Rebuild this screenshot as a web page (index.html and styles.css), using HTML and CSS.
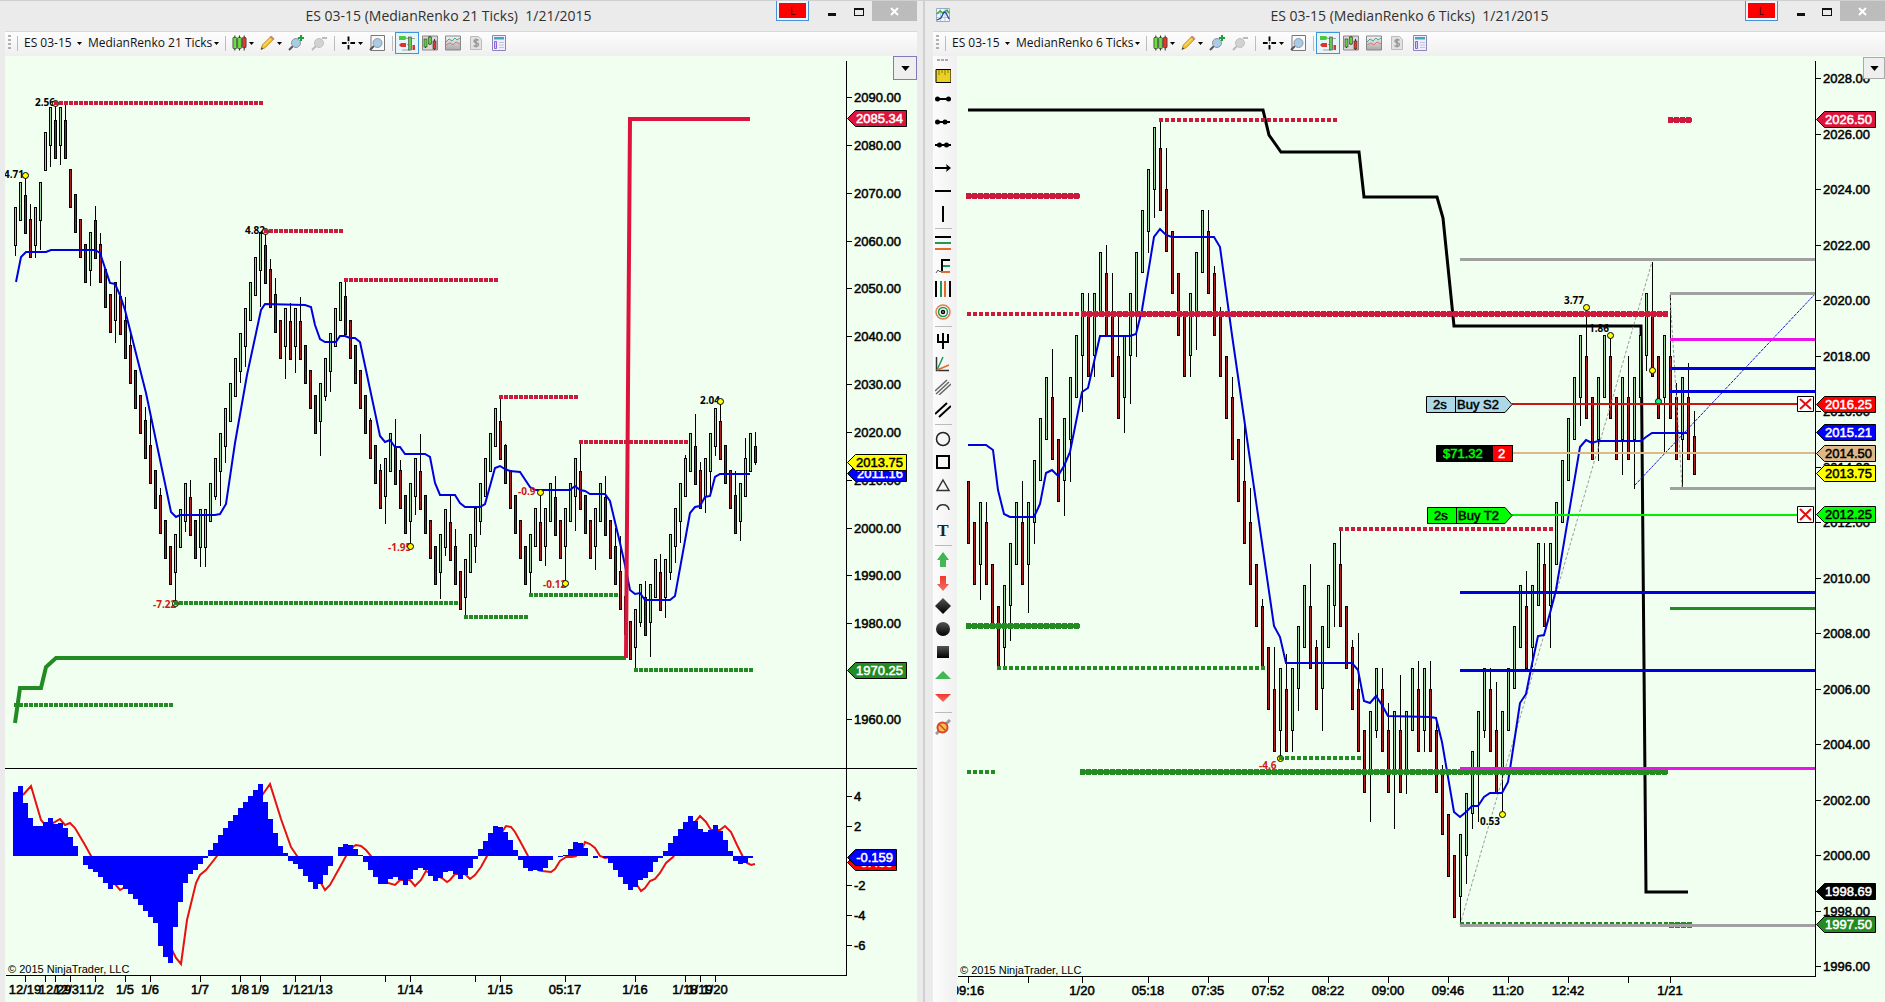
FILE: index.html
```html
<!DOCTYPE html>
<html lang="en">
<head>
<meta charset="utf-8">
<title>ES 03-15 charts</title>
<link rel="stylesheet" href="styles.css">
</head>
<body>
<svg class="defs" aria-hidden="true">
  <defs>
    <linearGradient id="dark" x1="0" y1="0" x2="0" y2="1"><stop offset="0" stop-color="#555"/><stop offset="1" stop-color="#000"/></linearGradient>
    <linearGradient id="gry" x1="0" y1="0" x2="0" y2="1"><stop offset="0" stop-color="#f4f4f4"/><stop offset="1" stop-color="#a8a8a8"/></linearGradient>
    <linearGradient id="up" x1="0" y1="0" x2="0" y2="1"><stop offset="0" stop-color="#3cb54a"/><stop offset="1" stop-color="#45b858"/></linearGradient>
    <linearGradient id="dn" x1="0" y1="0" x2="0" y2="1"><stop offset="0" stop-color="#f0392b"/><stop offset="1" stop-color="#f07068"/></linearGradient>
  </defs>
  <symbol id="caret" viewBox="0 0 5 3"><path d="M0 0h5L2.500 3z"/></symbol>
  <symbol id="candles" viewBox="0 0 16 16"><path d="M3 0v16M8 0v16M13 0v16" stroke="#222"/><g stroke="#333" stroke-width=".8"><rect x="1" y="2" width="4" height="12" rx="1" fill="#6be03c"/><rect x="6" y="2" width="4" height="12" rx="1" fill="#6be03c"/><rect x="11" y="2" width="4" height="11" rx="1" fill="#e23a2e"/></g></symbol>
  <symbol id="pencil" viewBox="0 0 16 16"><path d="M1 15l1.500-5L11 1.500l3 3L5.500 13z" fill="#f3c32e" stroke="#b3801a" stroke-width=".8"/><path d="M11 1.500l1-1 3 3-1 1z" fill="#e88a8a" stroke="#a55" stroke-width=".6"/><path d="M4 11l8-8" stroke="#fbe88a"/><path d="M1 15l.8-2.500 1.600 1.700z" fill="#333"/></symbol>
  <symbol id="zoomin" viewBox="0 0 16 16"><path d="M1 15l4-4" stroke="#555" stroke-width="2"/><circle cx="8" cy="8" r="4.500" fill="#a9cbe4" stroke="#8d99a6"/><path d="M13 0v6M10 3h6" stroke="#1ea03c" stroke-width="2"/></symbol>
  <symbol id="zoomout" viewBox="0 0 16 16"><path d="M1 15l4-4" stroke="#bbb" stroke-width="2"/><circle cx="8" cy="8" r="4.500" fill="#d2d2d2" stroke="#c0c0c0"/><path d="M11 3h5" stroke="#bbb" stroke-width="2"/></symbol>
  <symbol id="cross" viewBox="0 0 16 16"><path d="M8 1v5M8 10v5M1 8h5M10 8h5" stroke="#000" stroke-width="2"/><path d="M7.500 7.500h1v1h-1z"/></symbol>
  <symbol id="zoombox" viewBox="0 0 16 16"><path d="M2 .5h13.500v15H2z" fill="#fafafa" stroke="#777"/><path d="M1 15l4-4" stroke="#555" stroke-width="2"/><circle cx="8.500" cy="8" r="4.500" fill="#a9cbe4" stroke="#8d99a6"/></symbol>
  <symbol id="trader" viewBox="0 0 16 16"><path d="M0 1h6l2 2-2 2H0z" fill="#4fc93c"/><path d="M0 10l2-2h5v4H2z" fill="#d8362c"/><path d="M8 3.500h8M8 9.500h3M3 15h8" stroke="#9a9"/><rect x="9.500" y="2" width="3" height="13" fill="#63c94a" stroke="#444" stroke-width=".6"/><rect x="13.500" y="10" width="2.500" height="5" fill="#d8362c"/></symbol>
  <symbol id="barspane" viewBox="0 0 16 16"><path d="M.5 1h15v14H.5z" fill="#d8d8d8" stroke="#888"/><path d="M3.500 4v9M8 1v9M12.500 4v11" stroke="#333"/><rect x="2" y="4" width="3" height="8" fill="#5fd23c" stroke="#333" stroke-width=".6"/><rect x="6.500" y="2" width="3" height="7" fill="#5fd23c" stroke="#333" stroke-width=".6"/><rect x="11" y="6" width="3" height="8" fill="#e23a2e" stroke="#333" stroke-width=".6"/></symbol>
  <symbol id="linespane" viewBox="0 0 16 16"><path d="M.5 1h15v14H.5z" fill="url(#gry)" stroke="#888"/><path d="M1 7l3-3 3 2 3-3 2 2 3-2" fill="none" stroke="#4a9"/><path d="M1 10l4-2 3 2 3-3 4 2" fill="none" stroke="#d77"/></symbol>
  <symbol id="dollar" viewBox="0 0 16 16"><path d="M2.500 1.500h8l3 3v10h-11z" fill="#e2e2e2" stroke="#bbb"/><path d="M10.500 5.500C9 4 6 4.500 6 6.300s4.500 1.200 4.500 3.200S7 12 5.500 10.500M8 3.500v9" fill="none" stroke="#999" stroke-width="1.500"/></symbol>
  <symbol id="props" viewBox="0 0 16 16"><path d="M1.500.5h13v15h-13z" fill="#eef" stroke="#8a86b8"/><path d="M3 2h10v2.500H3z" fill="#45a3c4"/><path d="M3.500 6.500h2v7h-2z" fill="#d9c9ff" stroke="#8b62d8"/><path d="M8 7.500h5M8 10h5M8 12.500h5" stroke="#c3c3d8"/></symbol>
  <symbol id="appicon" viewBox="0 0 14 14"><path d="M.5.5h13v13H.5z" fill="#f4f8fc" stroke="#9ab"/><path d="M4.500 1v12M9 1v12M1 5h12M1 9.500h12" stroke="#b9c9da"/><path d="M1 6l3-3 3 2 4-3 2 3" fill="none" stroke="#3a3" stroke-width="1.500"/><path d="M1 12l4-2 3-6 2 1 3 6" fill="none" stroke="#24a" stroke-width="1.300"/></symbol>
</svg>
<main class="desk">
  <section class="window w1">
    <header class="titlebar">
      <span></span>
      <h1>ES 03-15 (MedianRenko 21 Ticks)&nbsp; 1/21/2015</h1>
      <div class="controls">
        <button class="link">L</button>
        <button class="min" aria-label="Minimize"><i></i></button>
        <button class="max" aria-label="Maximize"><i></i></button>
        <button class="close" aria-label="Close"><svg viewBox="0 0 9 9"><path d="M1 1l7 7M8 1l-7 7"/></svg></button>
      </div>
    </header>
    <div class="toolbar"></div>
    <div class="content">
      <div class="chart">
        <button class="chartmenu" aria-label="Chart menu"><svg class="caret"><use href="#caret"/></svg></button>
        <svg class="plot" id="chart1" viewBox="5 56 912 946" preserveAspectRatio="xMinYMin meet">
          <g class="candles"></g>
          <polyline class="ma" points="16,282 21,257 26,252 46,252 51,250 95,250 100,253 105,268 110,283 115,284 120,295 125,310 146,393 171,512 176,517 180,515 215,515 220,514 226,504 235,443 247,375 261,310 265,304 305,305 311,307 315,325 320,339 325,342 336,342 340,336 345,336 350,338 355,338 360,342 380,436 385,442 390,440 395,447 400,447 405,454 425,454 430,457 435,483 440,495 455,495 460,503 465,507 480,507 485,504 495,468 500,466 505,469 510,471 520,472 530,487 535,490 570,490 575,486 580,490 585,491 590,494 605,494 610,501 620,543 625,565 630,590 635,594 640,593 645,600 670,600 675,596 690,513 695,507 700,506 705,497 710,496 715,477 720,474 750,474"/>
          <polyline class="stop long" points="15,723 20,688 41,688 46,667 56,658 626,658"/>
          <polyline class="stop short" points="626,658 630,119 750,119"/>
          <g class="note"><text x="4" y="178">4.71</text><text x="35" y="106">2.56</text><text x="245" y="234">4.82</text><text x="700" y="404">2.04</text></g>
          <g class="note neg"><text x="388" y="551">-1.95</text><text x="153" y="608">-7.22</text><text x="518" y="495">-0.9</text><text x="543" y="588">-0.12</text></g>
          <g class="dot"><circle cx="25.500" cy="175.500" r="3"/><circle cx="410.500" cy="546.500" r="3"/><circle cx="540.500" cy="492.500" r="3"/><circle cx="565.500" cy="583.500" r="3"/><circle cx="720.500" cy="401.500" r="3"/><circle cx="55.500" cy="103.500" r="3"/><circle cx="265.500" cy="231.500" r="3"/><circle cx="175.500" cy="603.500" r="3"/></g>
          <g class="level res"><path d="M54 103H263M264 231H343M344 280H498M499 397H578M579 442H688"/></g>
          <g class="level sup"><path d="M14 705H173M174 603H458M464 617H528M529 595H618M634 670H753"/></g>
          <polyline class="signal" points="23,795 31,786 41,820 46,826 53,823 60,819 65,825 70,823 75,828 85,845 91,856 115,884 120,890 125,887 135,880 165,900 172,950 176,958 181,964 187,920 196,883 200,875 206,870 217,856 263,794 270,784 281,819 291,847 297,856 321,883 325,890 330,885 340,867 346,856 354,846 356,845 361,846 366,850 371,856 388,883 395,885 400,880 410,880 415,886 421,880 426,871 442,878 447,882 450,880 455,874 465,874 470,879 475,875 481,867 487,856 504,829 506,826 511,827 515,832 520,841 528,856 538,870 542,871 551,872 555,869 560,861 566,857 572,857 576,856 583,847 585,842 590,844 595,848 600,856 605,858 611,857 637,885 641,891 645,888 650,881 655,879 660,873 666,863 673,857 695,822 700,816 706,822 711,830 720,830 725,826 731,832 737,845 743,857 747,863 751,865 755,864"/>
          <g class="hist"></g>
          <path class="frame" d="M5 768.500H917M6 975.500H847M846.500 61V976"/>
          <text class="copy" x="8" y="973">© 2015 NinjaTrader, LLC</text>
          <g class="axis"></g>
          <g class="tags"></g>
        </svg>
      </div>
    </div>
  </section>
  <section class="window w2">
    <header class="titlebar">
      <svg class="appicon"><use href="#appicon"/></svg>
      <h1>ES 03-15 (MedianRenko 6 Ticks)&nbsp; 1/21/2015</h1>
      <div class="controls">
        <button class="link">L</button>
        <button class="min" aria-label="Minimize"><i></i></button>
        <button class="max" aria-label="Maximize"><i></i></button>
        <button class="close" aria-label="Close"><svg viewBox="0 0 9 9"><path d="M1 1l7 7M8 1l-7 7"/></svg></button>
      </div>
    </header>
    <div class="toolbar"></div>
    <div class="content">
      <nav class="draw" aria-label="Drawing tools">
        <span class="dots"></span>
        <button aria-label="Ruler"><svg viewBox="0 0 16 16"><path d="M1 1.500h15v13H1z" fill="#e8d024" stroke="#000"/><path d="M4 2v5M7 2v3M10 2v5M13 2v3" stroke="#8a7a10"/></svg></button>
        <button aria-label="Line"><svg viewBox="0 0 16 16"><path d="M2 8h12" stroke="#000" stroke-width="2"/><circle cx="2.500" cy="8" r="2.500"/><circle cx="13.500" cy="8" r="2.500"/></svg></button>
        <button aria-label="Ray"><svg viewBox="0 0 16 16"><path d="M2 8h13" stroke="#000" stroke-width="2"/><circle cx="2.500" cy="8" r="2.500"/><circle cx="10" cy="8" r="2.500"/></svg></button>
        <button aria-label="Extended line"><svg viewBox="0 0 16 16"><path d="M0 8h16" stroke="#000" stroke-width="2"/><circle cx="4.500" cy="8" r="2.500"/><circle cx="11.500" cy="8" r="2.500"/></svg></button>
        <button aria-label="Arrow line"><svg viewBox="0 0 16 16"><path d="M0 8h14" stroke="#000" stroke-width="2"/><path d="M11 4l5 4-5 4 1-4z"/></svg></button>
        <button aria-label="Horizontal line"><svg viewBox="0 0 16 16"><path d="M0 8h16" stroke="#000" stroke-width="2"/></svg></button>
        <button aria-label="Vertical line"><svg viewBox="0 0 16 16"><path d="M8 0v16" stroke="#000" stroke-width="2"/></svg></button>
        <hr>
        <button aria-label="Fibonacci retracements"><svg viewBox="0 0 16 16"><path d="M0 2h16" stroke="#000" stroke-width="2"/><path d="M0 8h16" stroke="#1d9a50" stroke-width="2"/><path d="M0 14h16" stroke="#e06a30" stroke-width="2"/></svg></button>
        <button aria-label="Fibonacci extensions"><svg viewBox="0 0 16 16"><path d="M7 14V2h8" fill="none" stroke="#000" stroke-width="2"/><path d="M8 8h7" stroke="#1d9a50" stroke-width="2"/><path d="M6 14h9" stroke="#e06a30" stroke-width="2"/><path d="M1 15l2-3 2 2 1-1" fill="none" stroke="#555"/></svg></button>
        <button aria-label="Fibonacci time"><svg viewBox="0 0 16 16"><path d="M1 0v16M15 0v16" stroke="#000" stroke-width="2"/><path d="M6 0v16" stroke="#1d9a50" stroke-width="2"/><path d="M10 0v16" stroke="#e06a30" stroke-width="2"/></svg></button>
        <button aria-label="Fibonacci circle"><svg viewBox="0 0 16 16"><g fill="none" stroke-width="1.500"><circle cx="8" cy="8" r="7" stroke="#d8824c"/><circle cx="8" cy="8" r="4.500" stroke="#1d9a50"/><circle cx="8" cy="8" r="1.500" stroke="#000"/></g></svg></button>
        <hr>
        <button aria-label="Andrews pitchfork"><svg viewBox="0 0 16 16"><path d="M3 1v8h10V1M8 0v16" fill="none" stroke="#000" stroke-width="2"/></svg></button>
        <button aria-label="Gann fan"><svg viewBox="0 0 16 16"><path d="M1.500 1v13.500H14" fill="none" stroke="#333" stroke-width="1.500"/><path d="M2 14L8 1" stroke="#1d9a50" stroke-width="1.500"/><path d="M2 14l12-5" stroke="#e06a30" stroke-width="1.500"/></svg></button>
        <button aria-label="Regression channel"><svg viewBox="0 0 16 16"><path d="M0 12L12 1M1 15L14 3M4 16L16 5" stroke="#666" stroke-width="1.500"/></svg></button>
        <button aria-label="Trend channel"><svg viewBox="0 0 16 16"><path d="M0 12L12 1M4 15L16 4" stroke="#000" stroke-width="2"/></svg></button>
        <hr>
        <button aria-label="Ellipse"><svg viewBox="0 0 16 16"><circle cx="8" cy="8" r="6.500" fill="none" stroke="#222" stroke-width="1.500"/></svg></button>
        <button aria-label="Rectangle"><svg viewBox="0 0 16 16"><path d="M2 2h12v12H2z" fill="none" stroke="#000" stroke-width="2"/></svg></button>
        <button aria-label="Triangle"><svg viewBox="0 0 16 16"><path d="M8 3l6 10.500H2z" fill="none" stroke="#333" stroke-width="1.500"/></svg></button>
        <button aria-label="Arc"><svg viewBox="0 0 16 16"><path d="M2 10c1-7 11-7 12 0" fill="none" stroke="#333" stroke-width="1.500"/></svg></button>
        <button class="txt" aria-label="Text">T</button>
        <hr>
        <button aria-label="Arrow up"><svg viewBox="0 0 16 16"><path d="M8 0l6 8h-3v7H5V8H2z" fill="url(#up)"/></svg></button>
        <button aria-label="Arrow down"><svg viewBox="0 0 16 16"><path d="M8 16l6-7h-3V1H5v8H2z" fill="url(#dn)"/></svg></button>
        <button aria-label="Diamond"><svg viewBox="0 0 16 16"><path d="M8 0l8 8-8 8-8-8z" fill="url(#dark)"/></svg></button>
        <button aria-label="Dot"><svg viewBox="0 0 16 16"><circle cx="8" cy="8" r="7" fill="url(#dark)"/></svg></button>
        <button aria-label="Square"><svg viewBox="0 0 16 16"><path d="M2 2h12v12H2z" fill="url(#dark)"/></svg></button>
        <button aria-label="Triangle up"><svg viewBox="0 0 16 16"><path d="M8 4l8 8H0z" fill="url(#up)"/></svg></button>
        <button aria-label="Triangle down"><svg viewBox="0 0 16 16"><path d="M8 12l8-8H0z" fill="url(#dn)"/></svg></button>
        <hr>
        <button aria-label="Remove drawings"><svg viewBox="0 0 16 16"><path d="M1 15L15 1" stroke="#999" stroke-width="3"/><circle cx="7.500" cy="8.500" r="5" fill="#f6c04a" stroke="#d8442e" stroke-width="2"/><path d="M4 5l7 7" stroke="#d8442e" stroke-width="1.500"/></svg></button>
      </nav>
      <div class="chart">
        <button class="chartmenu" aria-label="Chart menu"><svg class="caret"><use href="#caret"/></svg></button>
        <svg class="plot" id="chart2" viewBox="957 56 928 946" preserveAspectRatio="xMinYMin meet">
          <g class="note"><text x="1589" y="332">1.86</text></g>
          <polyline class="slow" points="968,110 1263,110 1269,135 1281,152 1359,152 1364,197 1437,197 1443,218 1454,326 1641,326 1646,892 1688,892"/>
          <g class="candles"></g>
          <path class="zig" d="M1460 925L1652 262M1670 295L1682 487"/>
          <polyline class="ma" points="968,445 986,445 993,450 998,490 1004,514 1010,517 1034,517 1040,504 1046,473 1052,470 1058,476 1064,466 1070,452 1082,392 1088,388 1100,336 1130,336 1136,334 1142,310 1154,237 1160,229 1166,235 1172,237 1214,237 1220,247 1232,335 1244,418 1274,626 1280,637 1286,663 1352,663 1358,670 1364,701 1370,703 1376,696 1382,705 1388,716 1430,717 1436,718 1442,742 1454,812 1460,817 1466,812 1472,806 1478,806 1484,797 1490,793 1502,793 1508,782 1514,743 1520,703 1526,694 1532,664 1538,636 1544,635 1550,613 1556,590 1580,447 1586,440 1592,443 1598,441 1641,441 1646,437 1652,433 1688,433"/>
          <path class="trend" d="M1635 485L1815 294"/>
          <g class="dot"><circle cx="1280.500" cy="758.500" r="3"/><circle cx="1502.500" cy="814.500" r="3"/><circle cx="1610.500" cy="335.500" r="3"/><circle cx="1652.500" cy="370.500" r="3"/><circle cx="1658.500" cy="401.500" r="3" class="mint"/></g>
          <g class="level six res"><path d="M967 314H1079M1159 120H1337M1339 529H1553"/></g>
          <g class="level six sup"><path d="M967 772H995M997 668H1265M1279 758H1361M1460 924H1668"/></g>
          <g class="heavy res"><path d="M966 196H1080M1081 314H1668M1668 120H1692"/></g>
          <g class="heavy sup"><path d="M966 626H1080M1080 772H1668M1669 925H1692"/></g>
          <g class="dot"><circle cx="1586.500" cy="307.500" r="3"/></g>
          <g class="hline">
            <path class="gray" d="M1460 259.500H1815M1670 293.500H1815M1670 488.500H1815M1460 925.500H1815"/>
            <path class="pink" d="M1670 339.500H1815M1460 768.500H1815"/>
            <path class="blue" d="M1670 368.500H1815M1670 391.500H1815M1460 592.500H1815M1460 670.500H1815"/>
            <path class="green" d="M1670 608.500H1815"/>
          </g>
          <g class="order"><path stroke="#cc1414" d="M1512 404H1797"/><path stroke="#deb887" d="M1513 453H1815"/><path stroke="#0e0" d="M1512 515H1797"/></g>
          <g class="note"><text x="1564" y="304">3.77</text><text x="1480" y="825">0.53</text></g>
          <g class="note neg"><text x="1259" y="769">-4.6</text></g>
          <g class="otag">
            <path fill="#add8e6" d="M1426.500 396.500H1505L1512 404.500 1505 412.500H1426.500zM1455.500 396V412"/><text x="1433" y="409">2s</text><text x="1457" y="409">Buy S2</text>
            <path fill="#0f0" d="M1427.500 507.500H1505L1512 515.500 1505 523.500H1427.500zM1456.500 507V523"/><text x="1434" y="520">2s</text><text x="1458" y="520">Buy T2</text>
            <path fill="#000" d="M1436.500 445.500H1512.500V461.500H1436.500z"/><path fill="#f00" d="M1492.500 445.500H1512.500V461.500H1492.500z"/><text class="pnl" x="1443" y="458">$71.32</text><text class="white" x="1498" y="458">2</text>
            <path fill="#fff" d="M1797.500 396.500H1813.500V411.500H1797.500zM1797.500 506.500H1813.500V522.500H1797.500z"/>
            <path class="x" d="M1800 399l11 10M1811 399l-11 10M1800 509l11 11M1811 509l-11 11"/>
          </g>
          <path class="frame" d="M958 976.500H1816M1815.500 61V977"/>
          <text class="copy" x="960" y="974">© 2015 NinjaTrader, LLC</text>
          <g class="axis"></g>
          <g class="tags"></g>
        </svg>
      </div>
    </div>
  </section>
</main>
<template id="tools">
  <span class="grip"></span><span class="sep"></span>
  <label class="pick inst"><select aria-label="Instrument"><option>ES 03-15</option></select><svg class="caret"><use href="#caret"/></svg></label>
  <label class="pick period"><select aria-label="Period"><option></option></select><svg class="caret"><use href="#caret"/></svg></label>
  <span class="sep"></span>
  <button class="drop" aria-label="Chart style"><svg><use href="#candles"/></svg><svg class="caret"><use href="#caret"/></svg></button>
  <button class="drop" aria-label="Draw"><svg><use href="#pencil"/></svg><svg class="caret"><use href="#caret"/></svg></button>
  <button class="tool" aria-label="Zoom in"><svg><use href="#zoomin"/></svg></button>
  <button class="tool" aria-label="Zoom out"><svg><use href="#zoomout"/></svg></button>
  <span class="sep"></span>
  <button class="drop" aria-label="Crosshair"><svg><use href="#cross"/></svg><svg class="caret"><use href="#caret"/></svg></button>
  <button class="tool" aria-label="Zoom frame"><svg><use href="#zoombox"/></svg></button>
  <span class="sep"></span>
  <div class="toggles">
    <button class="on" aria-label="Chart trader"><svg><use href="#trader"/></svg></button>
    <button aria-label="Data series"><svg><use href="#barspane"/></svg></button>
    <button aria-label="Indicators"><svg><use href="#linespane"/></svg></button>
    <button aria-label="Strategies"><svg><use href="#dollar"/></svg></button>
    <button aria-label="Properties"><svg><use href="#props"/></svg></button>
  </div>
</template>
<script src="charts.js"></script>
</body>
</html>
```
FILE: styles.css
```css
* { box-sizing: border-box; }
body { margin: 0; background: #ebebeb; font-family: "Open Sans", "Noto Sans", sans-serif; color: #222; }
button { margin: 0; padding: 0; border: 0; background: none; font: inherit; }
.defs { position: absolute; width: 0; height: 0; }

.desk { display: grid; grid-template-columns: 925fr 960fr; height: 100vh; overflow: hidden; }
.window { display: flex; flex-direction: column; min-width: 0; border-top: 1px solid #d0d0d0; background: #ebebeb; }
.w1 { border-right: 2px solid #d0d0d0; padding: 0 6px 0 5px; }
.w2 { padding-left: 8px; }

.titlebar { display: grid; grid-template-columns: 116px 1fr 141px; height: 30px; }
.w2 .titlebar { grid-template-columns: 141px 1fr 140px; }
.titlebar h1 { margin: 0; font-size: 14px; font-weight: 400; line-height: 29px; text-align: center; white-space: nowrap; color: #303030; }
.appicon { width: 14px; height: 14px; margin: 7px 0 0 3px; }
.controls { display: flex; height: 20px; overflow: hidden; }
.link { width: 34px; height: 20px; border: 1px solid #4a90d9; border-top: 0; background: #f00; box-shadow: inset 0 0 0 2px #eef4fb; font-size: 10px; line-height: 18px; color: #400; }
.min, .max { width: 27px; display: grid; place-items: center; }
.min { margin-left: 10px; }
.min i { width: 8px; height: 3px; margin-top: 7px; background: #111; }
.max i { width: 10px; height: 8px; border: 1px solid #111; border-top-width: 2px; margin-top: 1px; }
.close { flex: none; width: 45px; background: #bcbcbc; display: grid; place-items: center; }
.close svg { width: 9px; height: 9px; stroke: #fff; stroke-width: 2; }

.toolbar { display: flex; align-items: center; gap: 6px; height: 25px; padding: 0 3px 2px; background: linear-gradient(#fdfdfd, #efefef); border-top: 1px solid #d8d8d8; font-size: 12px; }
.grip { width: 3px; height: 16px; background: repeating-linear-gradient(#b0b0b0 0 2px, transparent 2px 4px); }
.sep { width: 1px; height: 15px; background: #bdbdbd; }
.pick { display: flex; align-items: center; justify-content: space-between; }
.pick select { flex: 1; min-width: 0; border: 0; padding: 0; appearance: none; background: none; font: inherit; line-height: 20px; color: #111; }
.inst { width: 58px; }
.period { width: 131px; }
.w2 .period { width: 124px; }
.caret { flex: none; width: 5px; height: 3px; fill: #000; }
.drop { width: 22px; display: flex; align-items: center; gap: 2px; }
.drop svg:first-child, .tool svg, .toggles svg { flex: none; width: 16px; height: 16px; display: block; }
.drop svg:first-child { width: 15px; }
.tool { width: 17px; }
.toggles { display: flex; align-items: center; gap: 7px; }
.toggles .on { margin: -3px -4px; padding: 2px 3px; border: 1px solid #3c96dc; background: #e8f4fc; }

.content { flex: 1; min-height: 0; display: flex; }
.draw { width: 24px; padding: 3px 2px 0; display: flex; flex-direction: column; gap: 7px; background: linear-gradient(90deg, #fcfcfc, #f0f0f0); }
.draw button, .draw svg { display: block; width: 16px; height: 16px; flex: none; }
.draw hr { flex: none; width: 17px; height: 1px; border: 0; margin: -1px 0; background: #bbb; }
.draw .txt { font: bold 17px/16px "Liberation Serif", serif; color: #222; }
.dots { flex: none; width: 11px; height: 2px; margin-left: 2px; background: repeating-linear-gradient(90deg, #aaa 0 3px, transparent 3px 4px); }
.chart { flex: 1; min-width: 0; position: relative; background: #f0fff0; overflow: hidden; }
.plot { display: block; width: 100%; height: 100%; font-family: "Liberation Sans", Arial, sans-serif; font-size: 13px; }
.chartmenu { position: absolute; top: 0; right: 0; width: 24px; height: 24px; border: 1px solid #8878b8; background: #efefef; display: grid; place-items: center; }
.w2 .chartmenu { top: 1px; right: 0; width: 22px; height: 22px; border-color: #aaa; }
.chartmenu .caret { width: 9px; height: 5px; }

.candles, .hist, .axis path, .frame, .hline, .order { shape-rendering: crispEdges; }
.candles .up { fill: #9ad89a; }
.candles .down { fill: #b01c1c; }
.ma { fill: none; stroke: #0000dc; stroke-width: 2; }
.stop { fill: none; stroke-width: 4; }
.long { stroke: #228b22; }
.short { stroke: #dc143c; }
.slow { fill: none; stroke: #000; stroke-width: 3; }
.signal { fill: none; stroke: #e81010; stroke-width: 2; }
.hist { fill: #00f; }
.res { stroke: #cc1a3c; }
.sup { stroke: #228b22; }
.level { stroke-width: 4; stroke-dasharray: 4 1; shape-rendering: crispEdges; }
.six { stroke-dasharray: 4 2; }
.heavy { stroke-width: 4; }
.heavy .bead { stroke-width: 6; stroke-dasharray: 5 1; }
.frame, .axis path { stroke: #000; fill: none; }
.axis text { stroke: #000; stroke-width: .5px; }
.copy { font-size: 11px; }
.note { font: bold 10px "Noto Sans", sans-serif; }
.neg { fill: #d01818; }
.dot { fill: #ff0; stroke: #000; }
.mint { fill: #0f8; }
.zig { stroke: #999; fill: none; stroke-dasharray: 3 2; }
.trend { stroke: #1414dc; stroke-dasharray: 3 1; fill: none; }
.hline { stroke-width: 3; }
.gray { stroke: #a0a0a0; }
.pink { stroke: #e814e8; }
.blue { stroke: #0000dc; }
.green { stroke: #228b22; }
.order { stroke-width: 2; }
.otag path { stroke: #000; }
.otag text { stroke: #000; stroke-width: .5px; }
.otag .pnl { fill: #0f0; stroke: #0f0; }
.otag .white { fill: #fff; stroke: #fff; }
.otag .x { stroke: #e01010; stroke-width: 2; }
.tags path { stroke: #000; }
.tags text { stroke-width: .5px; }
```
FILE: charts.js
```js
const NS = 'http://www.w3.org/2000/svg';
function add(parent, name, attrs, text) {
  const el = document.createElementNS(NS, name);
  for (const k in attrs) el.setAttribute(k, attrs[k]);
  if (text !== undefined) el.textContent = text;
  parent.append(el);
  return el;
}

document.querySelectorAll('.toolbar').forEach((bar, n) => {
  bar.append(document.getElementById('tools').content.cloneNode(true));
  bar.querySelector('.period option').textContent = ['MedianRenko 21 Ticks', 'MedianRenko 6 Ticks'][n];
});

// Each candle: direction, body top, optional ^high and _low of the wick, optional =body height.
function candles(svg, x0, step, body, data) {
  const g = svg.querySelector('.candles');
  data.trim().split(/\s+/).forEach((c, i) => {
    const top = +c.match(/^.(\d+)/)[1];
    const pick = (ch, d) => { const m = c.match(new RegExp('\\' + ch + '(\\d+)')); return m ? +m[1] : d; };
    const h = pick('=', body), high = pick('^', top), low = pick('_', top + h), x = x0 + i * step;
    add(g, 'rect', { x: x, y: high, width: 1, height: low - high });
    add(g, 'rect', { x: x - 1, y: top, width: 3, height: h });
    add(g, 'rect', { x: x, y: top + 1, width: 1, height: h - 2, class: c[0] === 'u' ? 'up' : 'down' });
  });
}

function axis(svg, x, y, base, prices, times) {
  const g = svg.querySelector('.axis');
  prices.forEach(([label, py]) => {
    add(g, 'path', { d: `M${x} ${py + 0.5}h6` });
    add(g, 'text', { x: x + 8, y: py + 5 }, label);
  });
  times.forEach(([label, tx]) => {
    add(g, 'path', { d: `M${tx + 0.5} ${y}v6` });
    if (label) add(g, 'text', { x: tx, y: base, 'text-anchor': 'middle' }, label);
  });
}

function tags(svg, x, list) {
  const g = svg.querySelector('.tags');
  list.forEach(([label, cy, fill, ink, w = 60]) => {
    add(g, 'path', { d: `M${x + 0.5} ${cy + 0.5}l8 -8H${x + w - 0.5}v16H${x + 8.5}z`, fill });
    add(g, 'text', { x: x + w - 4, y: cy + 5, 'text-anchor': 'end', fill: ink, stroke: ink }, label);
  });
}

const c1 = document.getElementById('chart1');
candles(c1, 15, 5, 39, `
u207_256 u182 d195^177 d219^204 u207_258 u182_250 u132 u107_167 d120^105 u107_165
d120^105 d169 d194 d219 d244 u232_286 d220^206 d244^233 d269 d294
u282_343 d296^261 d320^297 d345^333 d370 d395 d420^407 d445^417 d470 d495^488
d520 d546 u534_603 u509 u483_532 d497^480 d520 u509_567 u509_567 u483
u458_500 u433_506 u408_463 u383 u358 u333_383 u308_367 u282 u257 u232_307
d245^232 d269^259 d294^278 d320 u308_379 d321^303 u308_373 d321^297 d345 d370
d395 u383_456 u358_401 u333_392 u308 u282 d296^280 d320 d345 d370
d395 d420^418 d445 d470^464 u458_524 u433 d446^419 d470^460 d495 u483_546
u458_515 d471^434 d495 d520 d546 u534_599 u509_556 d522^494 d546^529 d571
u559_615 u534 u508_563 u483_535 u458 u433 u408 d421^399 d445^444 d470
d495 d520 d546 u534_593 u508 d522^493 u508_566 u483 d497^476 d520
u508_582 u483 u458_531 d471^443 d495 d520 u508_570 u483 d497^476 d520
d546^528 d571^536 d596 d621 u609_669 u584_627 d597^581 u584_657 u559 d572^554
u559_618 u534_580 u508_563 u483_543 u458^455 u433 d446^414 d470^462 u458_513 u433_495
u408_456 d421^404 d445 d470 d495^471 u483_541 u458^438 u433 d446^432_465=17`);

const zero = 856;
[792,786,803,818,826,826,822,818,824,823,828,837,846,856,865,869,872,877,883,889,885,885,889,894,899,905,911,917,923,946,
957,963,927,902,883,874,870,864,858,850,843,835,828,821,815,808,802,796,790,784,802,819,833,846,853,861,864,869,876,882,
889,884,875,866,856,847,844,845,849,855,862,870,877,884,884,879,877,880,885,879,870,868,870,876,881,878,872,871,874,879,
875,868,859,849,841,833,826,827,832,840,850,860,868,871,870,871,868,860,856,857,855,849,842,843,848,856,858,856,858,863,
870,877,884,890,887,880,878,872,862,858,851,843,836,829,822,816,821,829,832,830,825,831,840,851,861,864,863,858
].forEach((y, i) => add(c1.querySelector('.hist'), 'rect', { x: 13 + i * 5, y: Math.min(y, zero), width: 5, height: Math.abs(y - zero) }));

axis(c1, 846, 976, 994,
  [['2090.00', 97], ['2080.00', 145], ['2070.00', 193], ['2060.00', 241], ['2050.00', 288], ['2040.00', 336], ['2030.00', 384],
   ['2020.00', 432], ['2010.00', 480], ['2000.00', 528], ['1990.00', 575], ['1980.00', 623], ['1960.00', 719],
   ['4', 796], ['2', 826], ['-2', 885], ['-4', 915], ['-6', 945]],
  [['12/19', 25], ['', 45], ['12/29', 55], ['12/31', 70], ['1/2', 95], ['1/5', 125], ['1/6', 150], ['1/7', 200], ['1/8', 240],
   ['1/9', 260], ['1/12', 295], ['1/13', 320], ['', 385], ['1/14', 410], ['', 475], ['1/15', 500], ['05:17', 565], ['1/16', 635],
   ['1/18', 685], ['1/19', 700], ['1/20', 715]]);
tags(c1, 847, [['2085.34', 118, '#dc143c', '#fff'], ['2011.16', 473, '#00f', '#fff'], ['2013.75', 462, '#ff0', '#000'],
  ['1970.25', 670, '#228b22', '#fff'], ['-0.489', 862, '#f00', '#fff', 50], ['-0.159', 857, '#00f', '#fff', 50]]);

const c2 = document.getElementById('chart2');
candles(c2, 968, 6, 63, `
d481 d522 u502_600 d522^502 d564 d606 u585_668 u543_641 u502 d522^481
u502_613 u460_544 u418 u377 d397^349 d439 u418_516 u377_482 u335 u293_412
d314^293 u293_377 u252 d273^245 d314^273 d356^315 u335_433 u293_404 u252_357 u210
u169_253 u127_218 d148^120 d189^148 d231 d273 d314 u293_377 u252_350 u210
d231^210 d273^266 d314^307 d356 d397^377 d439 d481^425 d522^488 d564 d606^599
d647 d689^647 u668_757 d689^654 u668_752 u626_711 u585 d606^564 d647^640 u626_731
u585 u543_627 d564^530 d606 d647^640 d689^633 d730 u711_822 u668_738 d689^668
d730^703 u711_829 d730^675 u711_794 u668 d689^661 u668_752 d689^661 d730^717 d772^765
d814 d855 u834_924 u793_884 u751_829 u711_822 u668_738 d689^668 d730^682 u711_813
u668 u626 u585 d606^571 u585_667 u543 d564^543 u543_648 u502 u460
u418 u377 u335_426 d356^310 d397 u377_461 u335 d356^337 d397 u377_475
d397^356 u377_489 u335 u293_371 d314^262 d356 u335_453 d356^295 d397^383 u377_487
d397^363 d436^411=39`);
axis(c2, 1815, 977, 995,
  [['2028.00', 78], ['2026.00', 134], ['2024.00', 189], ['2022.00', 245], ['2020.00', 300], ['2018.00', 356], ['2016.00', 411],
   ['2014.00', 467], ['2012.00', 522], ['2010.00', 578], ['2008.00', 633], ['2006.00', 689], ['2004.00', 744], ['2002.00', 800],
   ['2000.00', 855], ['1998.00', 911], ['1996.00', 966]],
  [['09:16', 968], ['', 1028], ['1/20', 1082], ['05:18', 1148], ['07:35', 1208], ['07:52', 1268], ['08:22', 1328], ['09:00', 1388],
   ['09:46', 1448], ['11:20', 1508], ['12:42', 1568], ['', 1628], ['1/21', 1670]]);
tags(c2, 1816, [['2026.50', 119, '#dc143c', '#fff'], ['2016.25', 404, '#f00', '#fff'], ['2015.21', 432, '#00f', '#fff'],
  ['2014.50', 453, '#deb887', '#000'], ['2013.75', 473, '#ff0', '#000'], ['2012.25', 514, '#0f0', '#000'],
  ['1998.69', 891, '#000', '#fff'], ['1997.50', 924, '#228b22', '#fff']]);

document.querySelectorAll('.heavy').forEach(g => {
  const bead = g.firstElementChild.cloneNode();
  bead.setAttribute('class', 'bead');
  g.append(bead);
});
```
